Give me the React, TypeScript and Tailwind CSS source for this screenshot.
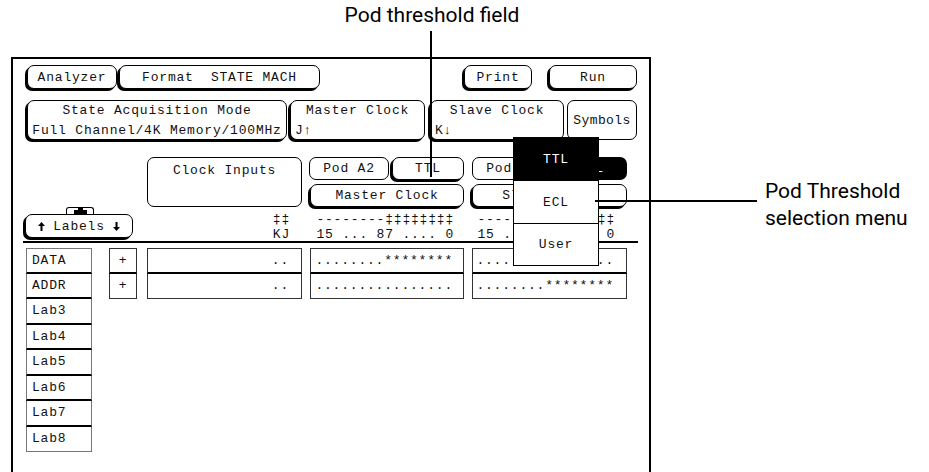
import React from "react";

const btn = "rounded-[7px] border border-black bg-white shadow-[-2px_2px_0_0_#000]";
const flat = "rounded-[7px] border border-black bg-white";

function Arrow({ up }: { up?: boolean }) {
  return (
    <svg width="7" height="9" viewBox="0 0 7 9" className={up ? "" : "rotate-180"}>
      <path d="M3.5 0 L7 4 L4.5 4 L4.5 9 L2.5 9 L2.5 4 L0 4 Z" fill="#000" />
    </svg>
  );
}

function Cells({ items, className, tone }: { items: string[]; className: string; tone: "gray" | "dark" }) {
  const side = tone === "gray" ? "border-[#777]" : "border-[#333]";
  return (
    <div className="flex flex-col">
      {items.map((t, i) => (
        <div
          key={i}
          className={`h-[25.5px] flex items-center whitespace-pre border-x ${side} ${i === 0 ? "border-t" : ""} ${
            i === items.length - 1 ? "border-b" : "border-b-2 border-b-black"
          } ${className}`}
        >
          {t}
        </div>
      ))}
    </div>
  );
}

function Screen() {
  return (
    <div className="ml-[11px] w-[640px] h-[420px] border-2 border-b-0 border-black font-['Liberation_Mono','DejaVu_Sans_Mono',monospace] text-[13px] tracking-[0.8px] leading-none text-[#111]">
      {/* top row */}
      <div className="flex mt-[6px]">
        <div className={`${btn} ml-[14px] w-[90px] h-[24px] flex items-center justify-center`}>Analyzer</div>
        <div className={`${btn} ml-[2px] w-[201px] h-[24px] flex items-center justify-center whitespace-pre`}>
          Format  STATE MACH
        </div>
        <div className={`${btn} ml-[144px] w-[68px] h-[24px] flex items-center justify-center`}>Print</div>
        <div className={`${btn} ml-[17px] w-[88px] h-[24px] flex items-center justify-center`}>Run</div>
      </div>

      {/* mode row */}
      <div className="flex mt-[11px]">
        <div className={`${btn} ml-[14px] w-[260px] h-[40px] flex flex-col items-center justify-center gap-[7px]`}>
          <span>State Acquisition Mode</span>
          <span>Full Channel/4K Memory/100MHz</span>
        </div>
        <div className={`${btn} ml-[3px] w-[135px] h-[40px] flex flex-col justify-center gap-[7px]`}>
          <span className="text-center">Master Clock</span>
          <span className="pl-[4px]">J↑</span>
        </div>
        <div className={`${btn} ml-[5px] w-[134px] h-[40px] flex flex-col justify-center gap-[7px]`}>
          <span className="text-center">Slave Clock</span>
          <span className="pl-[4px]">K↓</span>
        </div>
        <div className={`${flat} ml-[3px] w-[70px] h-[40px] flex items-center justify-center tracking-[0.4px]`}>
          Symbols
        </div>
      </div>

      {/* clock / pod row */}
      <div className="flex mt-[17px]">
        <div className={`${flat} ml-[134px] w-[155px] h-[50px] text-center pt-[6px]`}>Clock Inputs</div>
        <div className="ml-[7px] flex flex-col">
          <div className="flex">
            <div className={`${flat} w-[80px] h-[23px] flex items-center justify-center`}>Pod A2</div>
            <div className={`${btn} ml-[3px] w-[72px] h-[23px] flex items-center justify-center`}>TTL</div>
          </div>
          <div className={`${btn} mt-[4px] ml-[1px] w-[154px] h-[23px] flex items-center justify-center`}>
            Master Clock
          </div>
        </div>
        <div className="ml-[8px] flex flex-col">
          <div className="flex">
            <div className={`${flat} w-[80px] h-[23px] flex items-center justify-center`}>Pod A1</div>
            <div className="ml-[3px] w-[72px] h-[23px] rounded-[7px] bg-black text-white flex items-center justify-center">
              TTL
            </div>
          </div>
          <div className={`${btn} mt-[4px] w-[155px] h-[23px] flex items-center justify-center`}>Slave Clock</div>
        </div>
      </div>

      {/* labels header */}
      <div className="flex items-start h-[34px]">
        <div className="ml-[12px] w-[108px] flex flex-col">
          <div className="ml-[41px] w-[28px] h-[7px] border border-b-0 border-black rounded-t-[3px] flex flex-col items-center">
            <div className="w-[5px] h-[2px] bg-black" />
            <div className="w-[13px] h-[4px] bg-black" />
          </div>
          <div className={`${btn} h-[24px] flex items-center justify-center gap-[8px]`}>
            <Arrow up />
            <span>Labels</span>
            <Arrow />
          </div>
        </div>
        <div className="ml-[14px] w-[155px] pr-[12px] pt-[5px] text-right leading-[15px] whitespace-pre">
          ‡‡{"\n"}KJ
        </div>
        <div className="ml-[8px] w-[154px] pr-[10px] pt-[5px] text-right leading-[15px] whitespace-pre">
          --------‡‡‡‡‡‡‡‡{"\n"}15 ... 87 .... 0
        </div>
        <div className="ml-[8px] w-[155px] pr-[12px] pt-[5px] text-right leading-[15px] whitespace-pre">
          --------‡‡‡‡‡‡‡‡{"\n"}15 ... 87 .... 0
        </div>
      </div>
      <div className="ml-[10px] w-[615px] h-[2px] bg-black" />

      {/* label rows */}
      <div className="flex items-start mt-[5px]">
        <div className="ml-[13px] w-[66px]">
          <Cells
            tone="gray"
            className="pl-[5px]"
            items={["DATA", "ADDR", "Lab3", "Lab4", "Lab5", "Lab6", "Lab7", "Lab8"]}
          />
        </div>
        <div className="ml-[17px] w-[28px]">
          <Cells tone="dark" className="justify-center" items={["+", "+"]} />
        </div>
        <div className="ml-[10px] w-[155px]">
          <Cells tone="dark" className="justify-end pr-[12px]" items={["..", ".."]} />
        </div>
        <div className="ml-[8px] w-[154px]">
          <Cells tone="dark" className="justify-end pr-[10px]" items={["........********", "................"]} />
        </div>
        <div className="ml-[8px] w-[155px]">
          <Cells tone="dark" className="justify-end pr-[12px]" items={["................", "........********"]} />
        </div>
      </div>
    </div>
  );
}

function Menu() {
  return (
    <div className="absolute left-[513px] top-[137px] w-[86px] border border-black bg-white font-['Liberation_Mono','DejaVu_Sans_Mono',monospace] text-[13px] tracking-[0.8px] leading-none text-[#111]">
      <div className="h-[43px] bg-black text-white flex items-center justify-center">TTL</div>
      <div className="h-[42px] flex items-center justify-center">ECL</div>
      <div className="h-[42px] border-t border-black flex items-center justify-center">User</div>
    </div>
  );
}

export default function App() {
  return (
    <div className="relative w-[929px] h-[472px] overflow-hidden bg-white text-black">
      <div className="w-[864px] h-[57px] pt-[3px] text-center font-['Roboto',sans-serif] text-[21px] leading-[25px]">
        Pod threshold field
      </div>
      <div className="flex">
        <Screen />
        <div className="ml-[114px] pt-[121px] font-['Roboto',sans-serif] text-[21px] leading-[27px]">
          Pod Threshold
          <br />
          selection menu
        </div>
      </div>
      <Menu />
      <div className="absolute left-[430px] top-[31px] w-[2px] h-[146px] bg-black" />
      <div className="absolute left-[595px] top-[200px] w-[162px] h-[2px] bg-black" />
    </div>
  );
}
